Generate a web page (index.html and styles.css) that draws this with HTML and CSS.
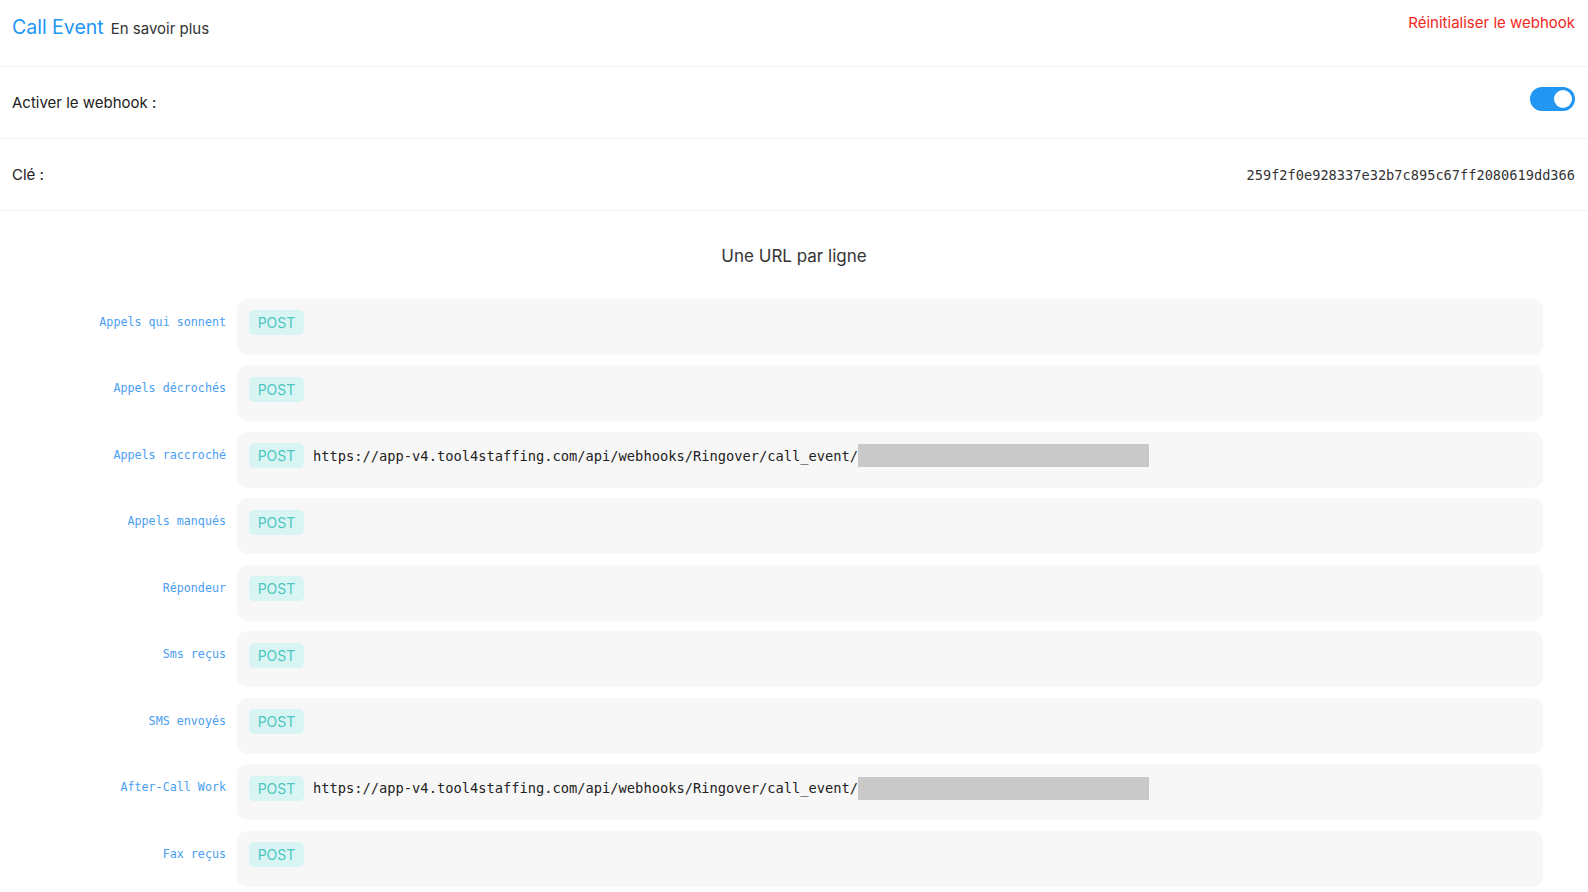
FILE: index.html
```html
<!DOCTYPE html>
<html lang="fr">
<head>
<meta charset="utf-8">
<title>Call Event – Webhook</title>
<link rel="stylesheet" href="styles.css">
</head>
<body>
<div class="page">
  <header class="head">
    <div class="head-title">
      <span class="title">Call Event</span>
      <a class="learn">En savoir plus</a>
    </div>
    <a class="reset">Réinitialiser le webhook</a>
  </header>

  <div class="setting">
    <span class="setting-label">Activer le webhook :</span>
    <span class="switch is-on"><span class="switch-knob"></span></span>
  </div>

  <div class="setting">
    <span class="setting-label">Clé :</span>
    <span class="key">259f2f0e928337e32b7c895c67ff2080619dd366</span>
  </div>

  <section class="urls">
    <h2 class="urls-title">Une URL par ligne</h2>
    <div class="url-list">
      <div class="url-row">
        <span class="url-label">Appels qui sonnent</span>
        <div class="url-box"><span class="method">POST</span></div>
      </div>
      <div class="url-row">
        <span class="url-label">Appels décrochés</span>
        <div class="url-box"><span class="method">POST</span></div>
      </div>
      <div class="url-row">
        <span class="url-label">Appels raccroché</span>
        <div class="url-box">
          <span class="method">POST</span>
          <span class="url-text">https://app-v4.tool4staffing.com/api/webhooks/Ringover/call_event/</span>
          <span class="url-hidden"></span>
        </div>
      </div>
      <div class="url-row">
        <span class="url-label">Appels manqués</span>
        <div class="url-box"><span class="method">POST</span></div>
      </div>
      <div class="url-row">
        <span class="url-label">Répondeur</span>
        <div class="url-box"><span class="method">POST</span></div>
      </div>
      <div class="url-row">
        <span class="url-label">Sms reçus</span>
        <div class="url-box"><span class="method">POST</span></div>
      </div>
      <div class="url-row">
        <span class="url-label">SMS envoyés</span>
        <div class="url-box"><span class="method">POST</span></div>
      </div>
      <div class="url-row">
        <span class="url-label">After-Call Work</span>
        <div class="url-box">
          <span class="method">POST</span>
          <span class="url-text">https://app-v4.tool4staffing.com/api/webhooks/Ringover/call_event/</span>
          <span class="url-hidden"></span>
        </div>
      </div>
      <div class="url-row">
        <span class="url-label">Fax reçus</span>
        <div class="url-box"><span class="method">POST</span></div>
      </div>
    </div>
  </section>
</div>
</body>
</html>
```

FILE: styles.css
```css
* {
  box-sizing: border-box;
}

html, body {
  margin: 0;
  padding: 0;
  background: #ffffff;
}

body {
  font-family: Inter, "Noto Sans", sans-serif;
  color: #333333;
}

/* header */
.head {
  height: 67px;
  display: flex;
  justify-content: space-between;
  align-items: flex-start;
  padding: 14px 13px 0 12px;
  border-bottom: 1px solid #f1f1f1;
}

.head-title {
  display: flex;
  align-items: baseline;
  gap: 7px;
  line-height: 24px;
  padding-top: 1px;
}

.title {
  font-size: 19.5px;
  color: #2196f3;
}

.learn {
  font-size: 15px;
  color: #333333;
  cursor: pointer;
}

.reset {
  font-size: 15px;
  line-height: 18px;
  color: #f2271c;
  cursor: pointer;
}

/* settings rows */
.setting {
  height: 72px;
  display: flex;
  justify-content: space-between;
  align-items: center;
  padding: 0 13px 0 12px;
  border-bottom: 1px solid #f1f1f1;
}

.setting-label {
  font-size: 15px;
  color: #222222;
}

.switch {
  position: relative;
  width: 45px;
  height: 24px;
  border-radius: 12px;
  background: #2196f3;
  margin-bottom: 8px;
}

.switch-knob {
  position: absolute;
  top: 3px;
  right: 3px;
  width: 18px;
  height: 18px;
  border-radius: 50%;
  background: #ffffff;
}

.key {
  font-family: "DejaVu Sans Mono", monospace;
  font-size: 13.65px;
  color: #333333;
}

/* url list */
.urls {
  padding-top: 33px;
}

.urls-title {
  margin: 0 0 31px 0;
  text-align: center;
  font-size: 17px;
  font-weight: 400;
  line-height: 24px;
  color: #333333;
}

.url-list {
  display: flex;
  flex-direction: column;
  gap: 10.8px;
  padding-right: 45px;
}

.url-row {
  display: flex;
  align-items: flex-start;
  gap: 11px;
}

.url-label {
  width: 226px;
  flex: none;
  padding-top: 11px;
  text-align: right;
  font-family: "DejaVu Sans Mono", monospace;
  font-size: 11.7px;
  line-height: 25px;
  color: #4a9ef0;
}

.url-box {
  flex: 1;
  height: 55.7px;
  display: flex;
  align-items: center;
  align-self: flex-start;
  padding: 0 12px;
  padding-bottom: 8px;
  background: #f7f7f7;
  border-radius: 10px;
}

.method {
  flex: none;
  width: 55px;
  height: 25px;
  display: flex;
  align-items: center;
  justify-content: center;
  border-radius: 5px;
  background: #d8f5f4;
  color: #4cc6c0;
  font-size: 14px;
}

.url-text {
  margin-left: 9px;
  font-family: "DejaVu Sans Mono", monospace;
  font-size: 13.72px;
  color: #222222;
}

.url-hidden {
  width: 291px;
  height: 23px;
  background: #c9c9c9;
}
```
